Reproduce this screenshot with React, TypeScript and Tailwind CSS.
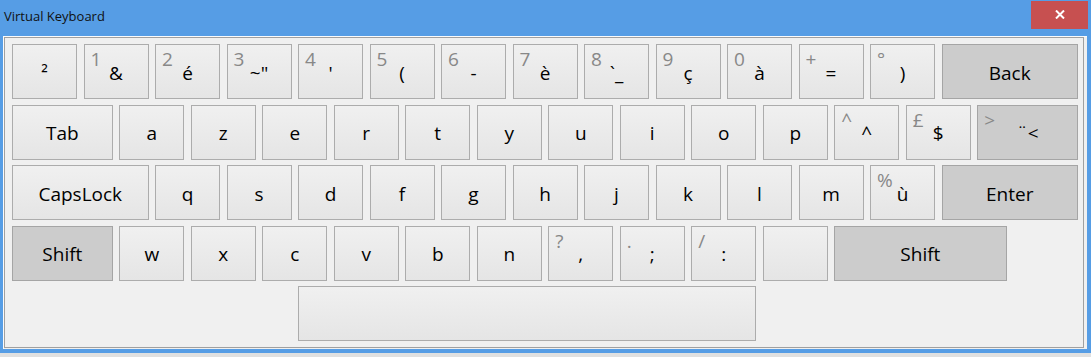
import React from "react";

type K = { main?: string; sec?: string; span: number; dark?: boolean; cls?: string };

const rows: K[][] = [
  [
    { main: "²", span: 2 },
    { sec: "1", main: "&", span: 2 },
    { sec: "2", main: "é", span: 2 },
    { sec: "3", main: "~\"", span: 2 },
    { sec: "4", main: "'", span: 2 },
    { sec: "5", main: "(", span: 2 },
    { sec: "6", main: "-", span: 2 },
    { sec: "7", main: "è", span: 2 },
    { sec: "8", main: "`_", span: 2 },
    { sec: "9", main: "ç", span: 2 },
    { sec: "0", main: "à", span: 2 },
    { sec: "+", main: "=", span: 2 },
    { sec: "°", main: ")", span: 2 },
    { main: "Back", span: 4, dark: true },
  ],
  [
    { main: "Tab", span: 3 },
    ...["a", "z", "e", "r", "t", "y", "u", "i", "o", "p"].map((c) => ({ main: c, span: 2 })),
    { sec: "^", main: "^", span: 2 },
    { sec: "£", main: "$", span: 2 },
    { sec: ">", main: "¨<", span: 3, dark: true },
  ],
  [
    { main: "CapsLock", span: 4 },
    ...["q", "s", "d", "f", "g", "h", "j", "k", "l", "m"].map((c) => ({ main: c, span: 2 })),
    { sec: "%", main: "ù", span: 2 },
    { main: "Enter", span: 4, dark: true },
  ],
  [
    { main: "Shift", span: 3, dark: true },
    ...["w", "x", "c", "v", "b", "n"].map((c) => ({ main: c, span: 2 })),
    { sec: "?", main: ",", span: 2 },
    { sec: ".", main: ";", span: 2 },
    { sec: "/", main: ":", span: 2 },
    { main: "", span: 2 },
    { main: "Shift", span: 5, dark: true },
  ],
];

const spanCls: Record<number, string> = {
  2: "col-span-2",
  3: "col-span-3",
  4: "col-span-4",
  5: "col-span-5",
};

function Key({ k }: { k: K }) {
  return (
    <div
      className={`relative border ${
        k.dark
          ? "bg-[#cccccc] border-[#a5a5a5]"
          : "bg-linear-to-b from-[#f0f0f0] to-[#e5e5e5] border-[#acacac]"
      } ${spanCls[k.span] ?? ""} ${k.cls ?? ""}`}
    >
      {k.sec !== undefined && (
        <span className="absolute left-[6px] top-[5px] leading-[19px] text-[19px] text-[#888888]">
          {k.sec}
        </span>
      )}
      <div className="flex h-full w-full items-center justify-center pt-[3px] text-[19px] text-black">
        {k.main}
      </div>
    </div>
  );
}

export default function App() {
  return (
    <div
      className="h-[357px] w-[1091px] bg-[#e0e0e0]"
      style={{ fontFamily: '"Segoe UI", "Open Sans", "Noto Sans", sans-serif' }}
    >
      <div className="flex h-[353px] flex-col bg-[#569de5] pb-[4px] pl-[3px] pr-[4px]">
        <div className="relative -ml-[3px] -mr-[4px] h-[36px] shrink-0 pl-[4px] pt-[8px]">
          <span className="block text-[13px] leading-[17px] text-[#111111]">Virtual Keyboard</span>
          <div className="absolute right-[3px] top-[1px] flex h-[28px] w-[57px] items-center justify-center bg-[#c75050]">
            <svg width="10" height="9" viewBox="0 0 10 9" className="mt-[-1px]">
              <path d="M1 0.5 L9 8.5 M9 0.5 L1 8.5" stroke="#ffffff" strokeWidth="2" />
            </svg>
          </div>
        </div>
        <div className="flex-1 border-l border-t border-[#fbfbfb] bg-[#f0f0f0] pb-[1px] pr-[3px]">
          <div className="h-full border border-[#a0a0a0] pb-[6px] pl-[7px] pr-[5px] pt-[6px]">
            <div className="grid w-[1066px] grid-cols-[repeat(30,minmax(0,1fr))] auto-rows-[55px] gap-x-[6.5px] gap-y-[5.5px]">
              {rows.map((r, i) => (
                <React.Fragment key={i}>
                  {r.map((k, j) => (
                    <Key key={`${i}-${j}`} k={k} />
                  ))}
                </React.Fragment>
              ))}
              <div className="col-[9/span_13] row-start-5 border border-[#acacac] bg-linear-to-b from-[#f0f0f0] to-[#e5e5e5]" />
            </div>
          </div>
        </div>
      </div>
    </div>
  );
}
